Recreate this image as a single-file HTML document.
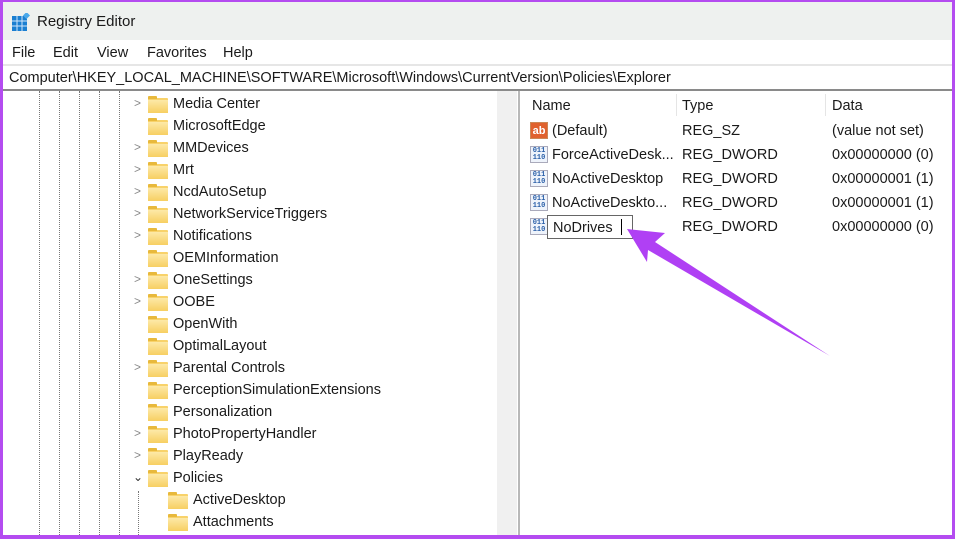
<!DOCTYPE html>
<html><head><style>
*{margin:0;padding:0;box-sizing:border-box}
body{width:955px;height:539px;overflow:hidden;background:#b44cf0;font-family:"Liberation Sans",sans-serif;font-size:14.5px;color:#1a1a1a;position:relative;white-space:nowrap}
#win{position:absolute;left:3px;top:2px;width:949px;height:533px;background:#fff;overflow:hidden}
.title{position:absolute;left:0;top:0;width:100%;height:38px;background:#eef1ef}
.title span{position:absolute;left:34px;top:11px;font-size:15px}
.menu{position:absolute;top:38px;left:0;width:100%;height:24px;background:#fff}
.menu span{position:absolute;top:5px}
.addr{position:absolute;top:62px;left:0;width:100%;height:27px;border-top:2px solid #e6e6e6;border-bottom:2px solid #8a8a8a;padding:4px 0 0 6px;font-size:14.5px}
.tree{position:absolute;left:0;top:89px;width:494px;height:444px}
.split{position:absolute;left:494px;top:89px;width:20px;height:444px;background:#f0f0f0}
.vline{position:absolute;left:515px;top:89px;width:2px;height:444px;background:#b8b8b8}
.dot{position:absolute;top:0;height:444px;border-left:1px dotted #777}
.row{position:absolute;height:22px;line-height:22px;white-space:nowrap}
.fold{position:absolute;width:20px;height:15px;background:#f8d26a;border-radius:1px}
.fold:before{content:"";position:absolute;left:0;top:-2px;width:9px;height:3px;background:#e8b93c;border-radius:1px 1px 0 0}
.fold:after{content:"";position:absolute;left:0;top:2px;width:20px;height:13px;background:linear-gradient(#fde9a8,#f7cf62)}
.chev{position:absolute;color:#888;font-size:12px}
.hd{position:absolute;top:96px;font-size:14.5px}
.col{position:absolute;top:92px;width:1px;height:22px;background:#e5e5e5}
.ico{position:absolute;width:18px;height:17px;font-size:7px;line-height:7px;font-weight:bold;color:#2a5fa8;font-family:"Liberation Mono",monospace;border:1px solid #aab;background:#eef3fb;text-align:center;padding-top:1px}
.ab{color:#fff;background:#e0622e;font-size:11px;line-height:14px;font-family:"Liberation Sans";border-color:#c85}
</style></head><body>
<div id="win">
<div class="title">
<svg style="position:absolute;left:9px;top:11px" width="18" height="18"><rect x="0" y="3" width="15" height="15" fill="#1a7fd1"/><g stroke="#cfe6fb" stroke-width="1"><line x1="5" y1="3" x2="5" y2="18"/><line x1="10" y1="3" x2="10" y2="18"/><line x1="0" y1="8" x2="15" y2="8"/><line x1="0" y1="13" x2="15" y2="13"/></g><rect x="12" y="0" width="5" height="5" fill="#4aa8ea" transform="rotate(45 14.5 2.5)"/></svg>
<span>Registry Editor</span></div>
<div class="menu"><span style="left:9px">File</span><span style="left:50px">Edit</span><span style="left:94px">View</span><span style="left:144px">Favorites</span><span style="left:220px">Help</span></div>
<div class="addr">Computer\HKEY_LOCAL_MACHINE\SOFTWARE\Microsoft\Windows\CurrentVersion\Policies\Explorer</div>
<div class="tree">
<div class="dot" style="left:36px"></div><div class="dot" style="left:56px"></div><div class="dot" style="left:76px"></div><div class="dot" style="left:96px"></div><div class="dot" style="left:116px"></div><div class="dot" style="left:135px;top:400px;height:44px"></div>
</div>
<div class="split"></div><div class="vline"></div>
<div class="hd" style="left:529px">Name</div><div class="hd" style="left:679px">Type</div><div class="hd" style="left:829px">Data</div>
<div class="col" style="left:673px"></div><div class="col" style="left:822px"></div>
</div>
<div style="position:absolute;left:3px;top:2px">
<div class="chev" style="left:131px;top:94px">&gt;</div><div class="fold" style="left:145px;top:96px"></div><div class="row" style="left:170px;top:91px">Media Center</div>
<div class="fold" style="left:145px;top:118px"></div><div class="row" style="left:170px;top:113px">MicrosoftEdge</div>
<div class="chev" style="left:131px;top:138px">&gt;</div><div class="fold" style="left:145px;top:140px"></div><div class="row" style="left:170px;top:135px">MMDevices</div>
<div class="chev" style="left:131px;top:160px">&gt;</div><div class="fold" style="left:145px;top:162px"></div><div class="row" style="left:170px;top:157px">Mrt</div>
<div class="chev" style="left:131px;top:182px">&gt;</div><div class="fold" style="left:145px;top:184px"></div><div class="row" style="left:170px;top:179px">NcdAutoSetup</div>
<div class="chev" style="left:131px;top:204px">&gt;</div><div class="fold" style="left:145px;top:206px"></div><div class="row" style="left:170px;top:201px">NetworkServiceTriggers</div>
<div class="chev" style="left:131px;top:226px">&gt;</div><div class="fold" style="left:145px;top:228px"></div><div class="row" style="left:170px;top:223px">Notifications</div>
<div class="fold" style="left:145px;top:250px"></div><div class="row" style="left:170px;top:245px">OEMInformation</div>
<div class="chev" style="left:131px;top:270px">&gt;</div><div class="fold" style="left:145px;top:272px"></div><div class="row" style="left:170px;top:267px">OneSettings</div>
<div class="chev" style="left:131px;top:292px">&gt;</div><div class="fold" style="left:145px;top:294px"></div><div class="row" style="left:170px;top:289px">OOBE</div>
<div class="fold" style="left:145px;top:316px"></div><div class="row" style="left:170px;top:311px">OpenWith</div>
<div class="fold" style="left:145px;top:338px"></div><div class="row" style="left:170px;top:333px">OptimalLayout</div>
<div class="chev" style="left:131px;top:358px">&gt;</div><div class="fold" style="left:145px;top:360px"></div><div class="row" style="left:170px;top:355px">Parental Controls</div>
<div class="fold" style="left:145px;top:382px"></div><div class="row" style="left:170px;top:377px">PerceptionSimulationExtensions</div>
<div class="fold" style="left:145px;top:404px"></div><div class="row" style="left:170px;top:399px">Personalization</div>
<div class="chev" style="left:131px;top:424px">&gt;</div><div class="fold" style="left:145px;top:426px"></div><div class="row" style="left:170px;top:421px">PhotoPropertyHandler</div>
<div class="chev" style="left:131px;top:446px">&gt;</div><div class="fold" style="left:145px;top:448px"></div><div class="row" style="left:170px;top:443px">PlayReady</div>
<div class="chev" style="left:130px;top:468px;color:#333">&#8964;</div><div class="fold" style="left:145px;top:470px"></div><div class="row" style="left:170px;top:465px">Policies</div>
<div class="fold" style="left:165px;top:492px"></div><div class="row" style="left:190px;top:487px">ActiveDesktop</div>
<div class="fold" style="left:165px;top:514px"></div><div class="row" style="left:190px;top:509px">Attachments</div>
<div class="ico ab" style="left:527px;top:120px">ab</div><div class="row" style="left:549px;top:118px">(Default)</div><div class="row" style="left:679px;top:118px">REG_SZ</div><div class="row" style="left:829px;top:118px">(value not set)</div>
<div class="ico" style="left:527px;top:144px">011<br>110</div><div class="row" style="left:549px;top:142px">ForceActiveDesk...</div><div class="row" style="left:679px;top:142px">REG_DWORD</div><div class="row" style="left:829px;top:142px">0x00000000 (0)</div>
<div class="ico" style="left:527px;top:168px">011<br>110</div><div class="row" style="left:549px;top:166px">NoActiveDesktop</div><div class="row" style="left:679px;top:166px">REG_DWORD</div><div class="row" style="left:829px;top:166px">0x00000001 (1)</div>
<div class="ico" style="left:527px;top:192px">011<br>110</div><div class="row" style="left:549px;top:190px">NoActiveDeskto...</div><div class="row" style="left:679px;top:190px">REG_DWORD</div><div class="row" style="left:829px;top:190px">0x00000001 (1)</div>
<div class="ico" style="left:527px;top:216px">011<br>110</div>
<div style="position:absolute;left:544px;top:213px;width:86px;height:24px;border:1px solid #666;background:#fff;padding:3px 0 0 5px">NoDrives <span style="display:inline-block;width:1px;height:16px;background:#000;vertical-align:-3px;margin-left:4px"></span></div>
<div class="row" style="left:679px;top:214px">REG_DWORD</div><div class="row" style="left:829px;top:214px">0x00000000 (0)</div>
</div>
<svg style="position:absolute;left:0;top:0" width="955" height="539"><polygon points="627,229 665,233 655,242 830,356 648,250 647,262" fill="#b040f4"/></svg>
</body></html>
